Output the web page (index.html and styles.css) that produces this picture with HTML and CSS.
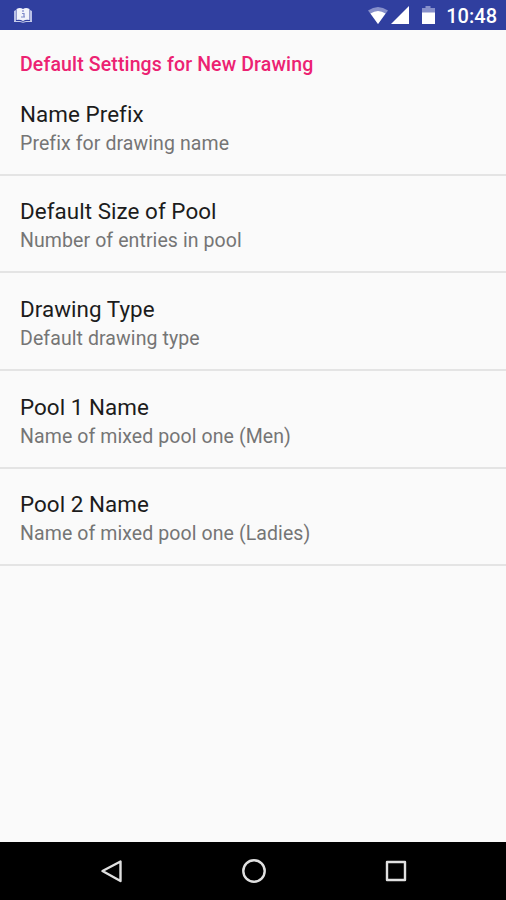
FILE: index.html
```html
<!DOCTYPE html>
<html lang="en">
<head>
<meta charset="utf-8">
<title>Settings</title>
<link rel="stylesheet" href="styles.css">
</head>
<body>
<div class="screen">
<header class="status">
<svg class="book" width="20" height="18" viewBox="0 0 20 18"><path d="M1 5l2-1v11l-2 1zM19 5l-2-1v11l2 1z" fill="#b9c0e6"/><path d="M3.500 3Q7 1 10 3Q13 1 16.500 3V14Q13 13 10 15Q7 13 3.500 14z" fill="#f1f3fb"/><path d="M1 15.500h6l3 .8 3-.8h6" fill="none" stroke="#c5cbea"/><path d="M10 4v2M9 7.500h2v3M8 11h4" fill="none" stroke="#7d89c9" stroke-width="1.200"/></svg>
<div class="right">
<svg class="signals" width="70" height="20" viewBox="0 0 70 20"><path d="M0 4.500Q10-2.500 20 4.500L10 18z" fill="#8790ca"/><path d="M2.500 7.500Q10 2.500 17.500 7.500L10 18z" fill="#fff"/><path d="M23 18L41 0v18z" fill="#fff"/><path d="M54 2h3.500V0h5v2H67v16H54z" fill="#8790ca"/><path d="M54 6.500h13V18H54z" fill="#fff"/></svg>
<span class="time">10:48</span>
</div>
</header>
<main class="content">
<h1>Default Settings for New Drawing</h1>
<section class="item"><div class="title">Name Prefix</div><div class="summary">Prefix for drawing name</div></section>
<section class="item"><div class="title">Default Size of Pool</div><div class="summary">Number of entries in pool</div></section>
<section class="item"><div class="title">Drawing Type</div><div class="summary">Default drawing type</div></section>
<section class="item"><div class="title">Pool 1 Name</div><div class="summary">Name of mixed pool one (Men)</div></section>
<section class="item"><div class="title">Pool 2 Name</div><div class="summary">Name of mixed pool one (Ladies)</div></section>
</main>
<nav class="nav">
<svg width="506" height="58" viewBox="0 0 506 58"><g fill="none" stroke="#e0e0e0" stroke-width="2.400"><path d="M120.500 19.500v19.500L102.500 29z" stroke-linejoin="round"/><circle cx="254" cy="29" r="10.700"/><rect x="387" y="20" width="18" height="18" stroke-linejoin="round"/></g></svg>
</nav>
</div>
</body>
</html>
```
FILE: styles.css
```css
body { margin: 0; }
.screen { width: 506px; height: 900px; display: flex; flex-direction: column; background: #fafafa; font-family: Roboto, sans-serif; overflow: hidden; }
.status { height: 30px; flex: none; background: #303f9f; display: flex; justify-content: space-between; box-sizing: border-box; padding: 6px 9px 0 13px; }
.right { display: flex; }
.signals { margin-right: 8px; }
.time { color: #fff; font-size: 20px; line-height: 21px; font-weight: 500; }
.content { flex: 1; }
h1 { margin: 0; padding: 23px 20px 0; height: 25px; font-size: 19.500px; line-height: 24px; font-weight: 500; letter-spacing: 0.130px; color: #ec2272; }
.item { box-sizing: border-box; height: 97.700px; padding: 21.700px 20px 0; border-bottom: 2px solid #e4e4e4; }
.title { font-size: 22.400px; line-height: 28px; letter-spacing: 0.060px; color: #1c1c1c; }
.summary { font-size: 19.500px; line-height: 31px; letter-spacing: 0.090px; color: #757575; }
.nav { height: 58px; flex: none; box-sizing: border-box; background: #000; }
.nav svg { display: block; }
```
